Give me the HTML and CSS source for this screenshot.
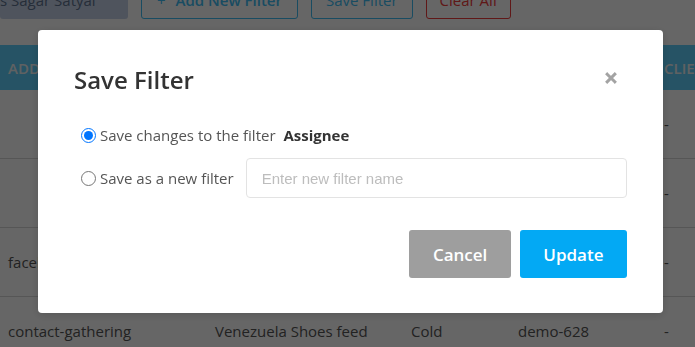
FILE: index.html
```html
<!DOCTYPE html>
<html lang="en">
<head>
<meta charset="UTF-8">
<meta name="viewport" content="width=device-width, initial-scale=1.0">
<title>Save Filter</title>
<link rel="stylesheet" href="styles.css">
</head>
<body>
<div class="toolbar">
  <div class="user-box">s Sagar Satyal</div>
  <button class="btn-outline btn-add"><span class="plus">+</span>Add New Filter</button>
  <button class="btn-outline">Save Filter</button>
  <button class="btn-outline btn-clear">Clear All</button>
</div>

<table class="leads">
  <colgroup>
    <col style="width:207px">
    <col style="width:196px">
    <col style="width:107px">
    <col style="width:146px">
    <col style="width:150px">
  </colgroup>
  <thead>
    <tr>
      <th>Added By</th>
      <th>Feed</th>
      <th>Type</th>
      <th>Campaign</th>
      <th>Client</th>
    </tr>
  </thead>
  <tbody>
    <tr>
      <td></td>
      <td>Leads form</td>
      <td>Hot</td>
      <td>demo-611</td>
      <td>-</td>
    </tr>
    <tr>
      <td></td>
      <td>Website feed</td>
      <td>Warm</td>
      <td>demo-617</td>
      <td>-</td>
    </tr>
    <tr>
      <td>facebook</td>
      <td>Facebook feed</td>
      <td>Cold</td>
      <td>demo-620</td>
      <td>-</td>
    </tr>
    <tr>
      <td>contact-gathering</td>
      <td>Venezuela Shoes feed</td>
      <td>Cold</td>
      <td>demo-628</td>
      <td>-</td>
    </tr>
  </tbody>
</table>

<div class="overlay">
  <div class="modal">
    <div class="modal-header">
      <h2>Save Filter</h2>
      <span class="close">
        <svg width="12" height="12" viewBox="0 0 12 12">
          <path d="M2.2 2.2 L9.8 9.8 M9.8 2.2 L2.2 9.8" stroke="#a3a3a3" stroke-width="3" stroke-linecap="square" fill="none"/>
        </svg>
      </span>
    </div>

    <div class="options">
      <label class="option">
        <input type="radio" name="saveMode" checked>
        <span>Save changes to the filter <b class="filter-name">Assignee</b></span>
      </label>
      <label class="option">
        <input type="radio" name="saveMode">
        <span>Save as a new filter</span>
        <input type="text" class="filter-input" placeholder="Enter new filter name">
      </label>
    </div>

    <div class="actions">
      <button class="btn btn-cancel">Cancel</button>
      <button class="btn btn-update">Update</button>
    </div>
  </div>
</div>
</body>
</html>
```

FILE: styles.css
```css
* {
  box-sizing: border-box;
}
body {
  margin: 0;
  height: 347px;
  overflow: hidden;
  font-family: 'Open Sans', 'Liberation Sans', sans-serif;
  background: #fff;
}

/* page behind the dialog */
.toolbar {
  display: flex;
  gap: 13px;
  height: 38px;
  margin-top: -19px;
}
.user-box {
  width: 128px;
  background: #c5d2e8;
  color: #5f7390;
  font-size: 15px;
  line-height: 38px;
  border-radius: 3px;
  white-space: nowrap;
}
.btn-outline {
  height: 38px;
  padding: 0 14px;
  background: #fff;
  border: 1px solid #40bdf5;
  border-radius: 3px;
  color: #40bdf5;
  font-family: 'Open Sans', sans-serif;
  font-size: 15px;
}
.btn-add {
  padding: 0 15px;
  font-weight: 600;
}
.plus {
  font-weight: 400;
  margin-right: 10px;
}
.btn-clear {
  padding: 0 13px;
  border-color: #f03c3c;
  color: #f03c3c;
}
.leads {
  margin-top: 26px;
  width: 806px;
  table-layout: fixed;
  border-collapse: separate;
  border-spacing: 0;
  font-size: 15px;
  color: #555;
}
.leads th {
  height: 45px;
  padding: 0 8px;
  background: #5fd0fc;
  color: #eef3f6;
  font-weight: 600;
  text-align: left;
  text-transform: uppercase;
  white-space: nowrap;
  overflow: hidden;
}
.leads td {
  height: 69px;
  padding: 0 8px;
  border-bottom: 1px solid #d8d8d8;
  white-space: nowrap;
}

/* dialog */
.overlay {
  position: fixed;
  top: 0;
  left: 0;
  right: 0;
  bottom: 0;
  background: rgba(0, 0, 0, 0.6);
}
.modal {
  position: absolute;
  top: 30px;
  left: 38px;
  width: 625px;
  padding: 34px 36px 35px;
  background: #fff;
  border-radius: 4px;
  box-shadow: 0 2px 8px rgba(0, 0, 0, 0.15);
}
.modal-header {
  display: flex;
  justify-content: space-between;
  align-items: flex-start;
}
.modal-header h2 {
  margin: 0;
  font-size: 24px;
  font-weight: 600;
  line-height: 32px;
  color: #333;
}
.close {
  display: flex;
  margin: 8px 10px 0 0;
  cursor: pointer;
}
.options {
  margin-top: 29px;
}
.option {
  display: flex;
  align-items: center;
  font-size: 15px;
  line-height: 21px;
  color: #555;
}
.option + .option {
  margin-top: 12px;
}
.option input[type="radio"] {
  width: 15px;
  height: 15px;
  margin: 0 4px 0 7px;
}
.filter-name {
  margin-left: 4px;
  color: #333;
  font-weight: 700;
}
.filter-input {
  flex: 1;
  height: 40px;
  margin-left: 12px;
  padding: 0 15px;
  border: 1px solid #e3e3e3;
  border-radius: 4px;
  font-family: 'Liberation Sans', Arial, sans-serif;
  font-size: 15px;
  color: #333;
}
.filter-input::placeholder {
  color: #bdbdbd;
}
.filter-input:focus {
  outline: none;
  border-color: #03a9f4;
}
.actions {
  display: flex;
  justify-content: flex-end;
  gap: 9px;
  margin-top: 32px;
}
.btn {
  height: 48px;
  padding: 0 23.5px;
  border: none;
  border-radius: 3px;
  color: #fff;
  font-family: 'Open Sans', sans-serif;
  font-size: 17px;
  font-weight: 600;
  cursor: pointer;
}
.btn-cancel {
  background: #9e9e9e;
}
.btn-update {
  background: #03a9f4;
}
```
